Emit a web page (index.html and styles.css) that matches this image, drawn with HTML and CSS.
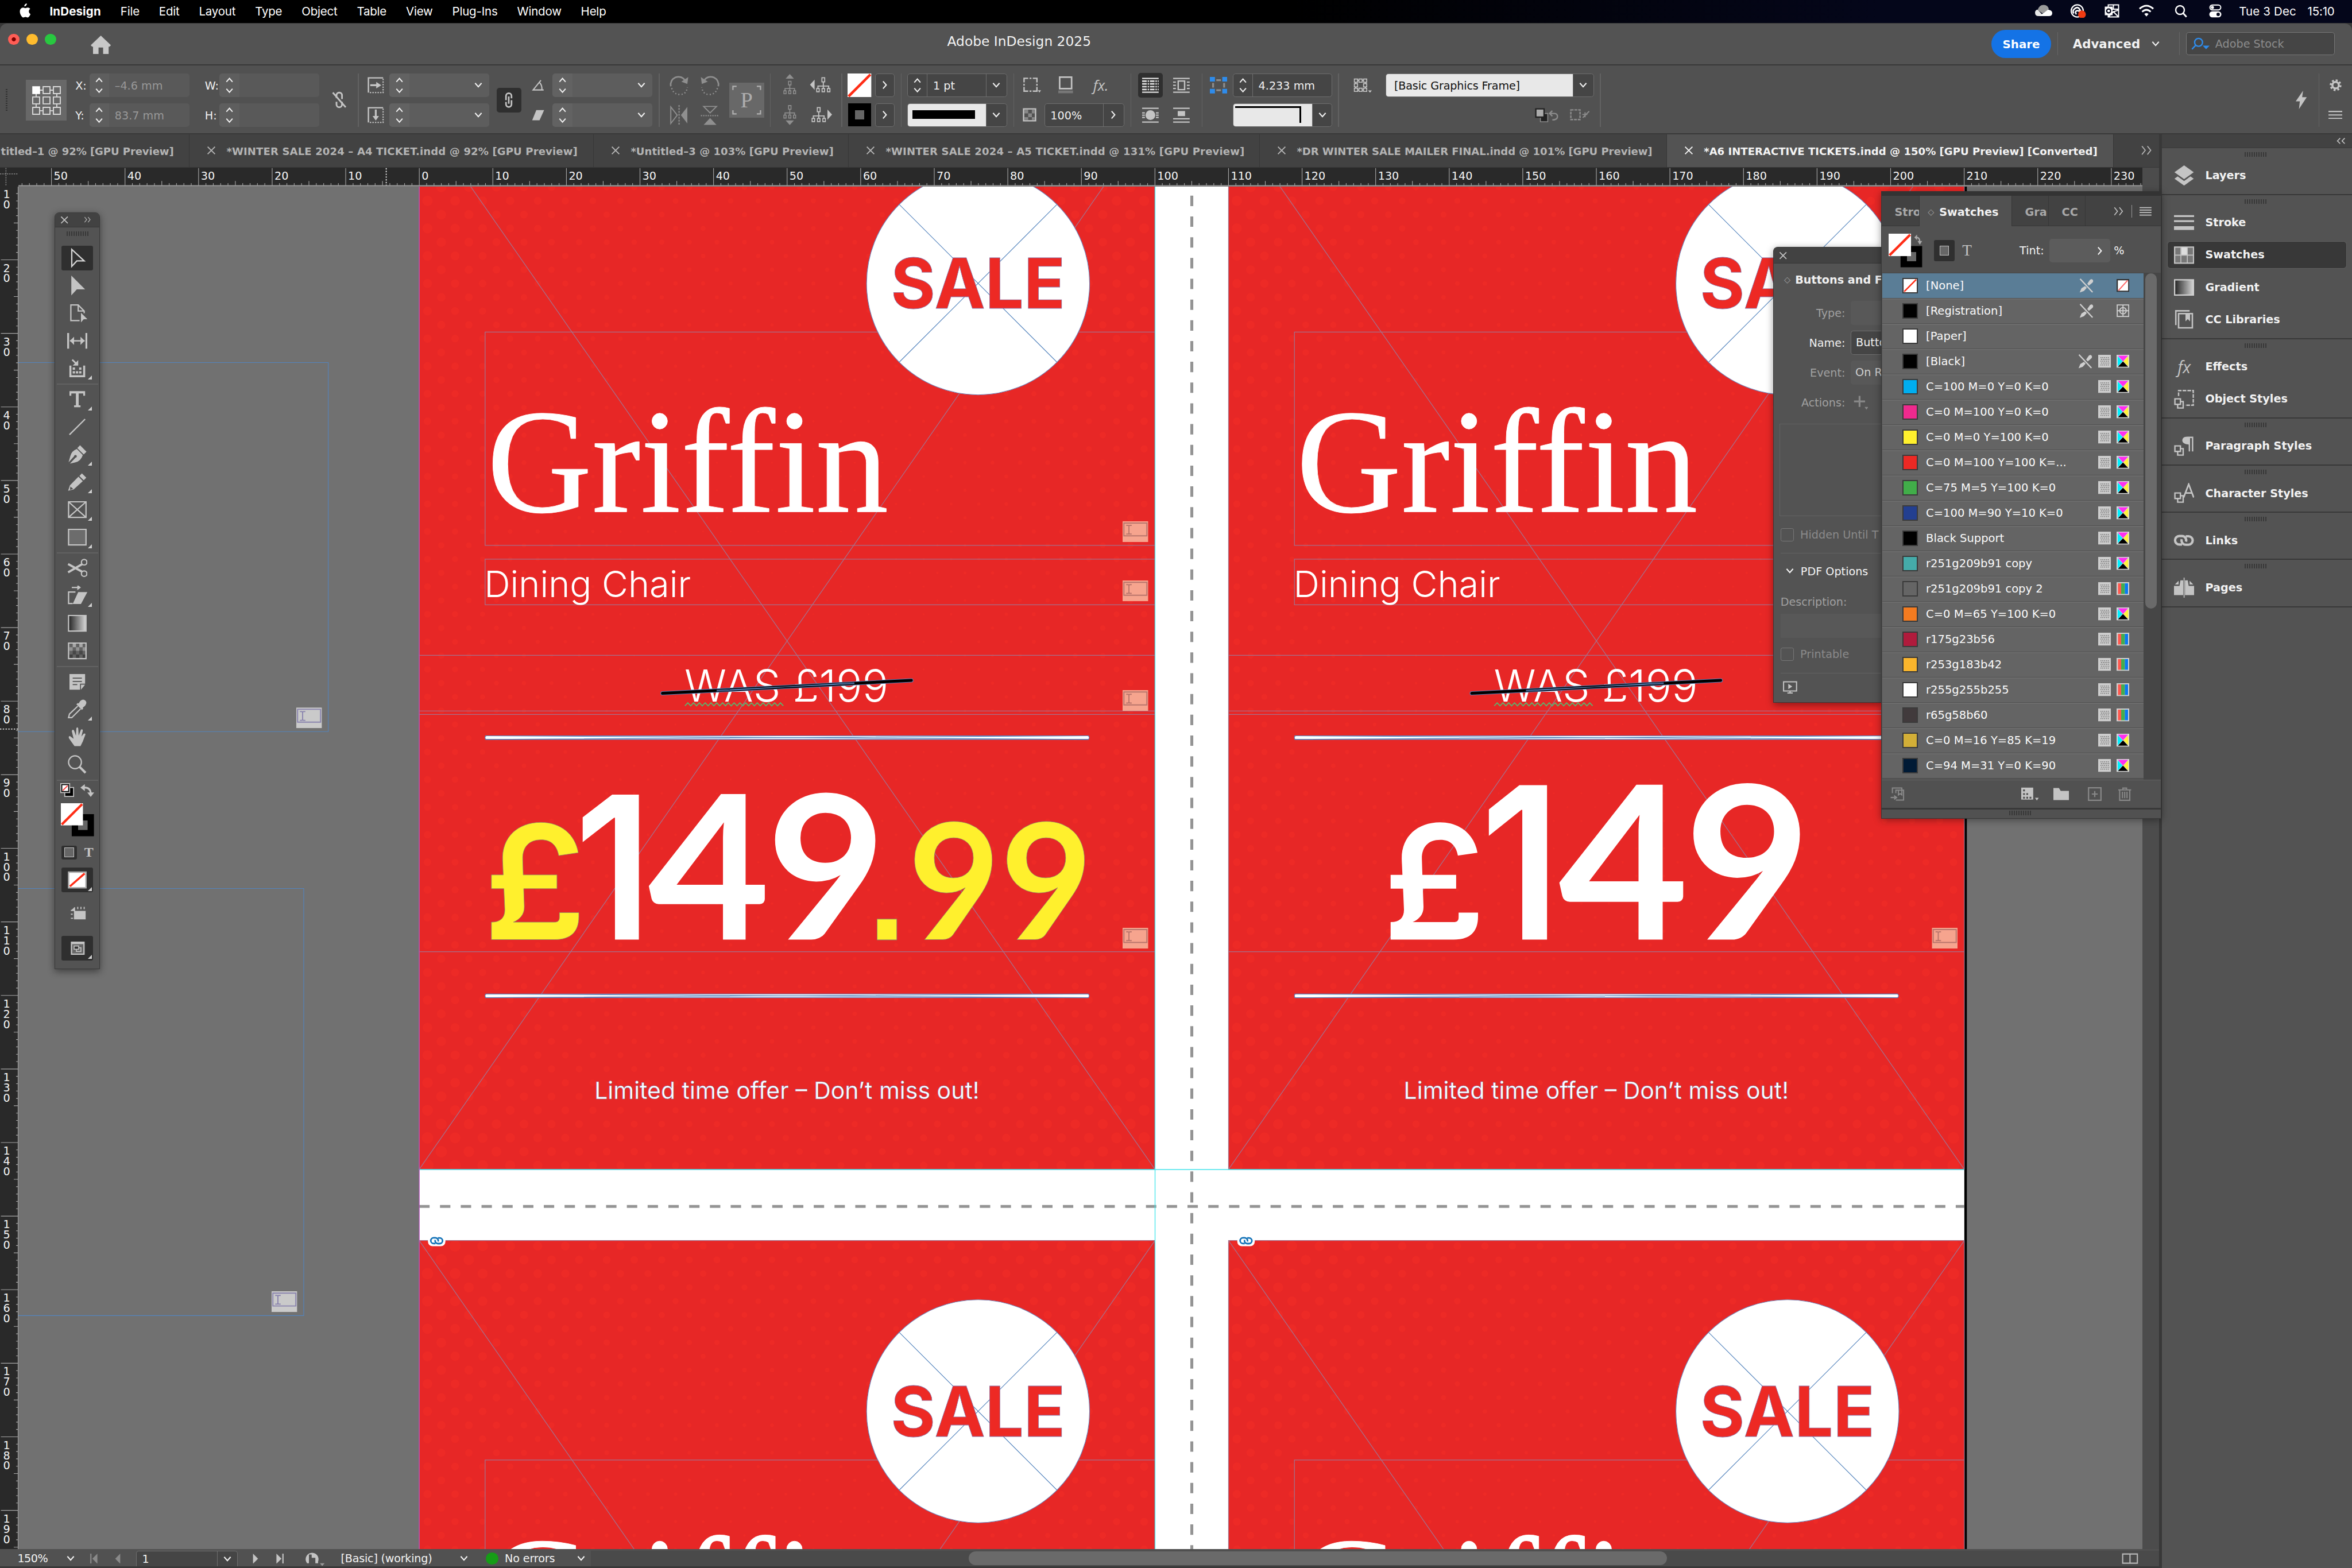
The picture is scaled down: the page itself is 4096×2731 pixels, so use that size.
FILE: index.html
```html
<!DOCTYPE html>
<html lang="en">
  <head>
    <meta charset="utf-8" />
    <title>Adobe InDesign 2025</title>
    <link rel="stylesheet" href="styles.css" />
  </head>

  <body>
    <svg class="defs" width="0" height="0">
      <symbol id="chev-down" viewBox="0 0 10 10"><path d="M1.5 3 5 7 8.5 3" fill="none" stroke="currentColor" stroke-width="1.3"/></symbol>
      <symbol id="chev-up" viewBox="0 0 10 10"><path d="M1.5 7 5 3 8.5 7" fill="none" stroke="currentColor" stroke-width="1.3"/></symbol>
      <symbol id="chev-right" viewBox="0 0 10 10"><path d="M3 1 6.5 5 3 9" fill="none" stroke="currentColor" stroke-width="1.3"/></symbol>
      <symbol id="chev-double" viewBox="0 0 14 12"><path d="M1.5 1 5.5 6 1.5 11M8 1 12 6 8 11" fill="none" stroke="currentColor" stroke-width="1.2"/></symbol>
      <symbol id="close" viewBox="0 0 10 10"><path d="M1 1 9 9M9 1 1 9" stroke="currentColor" stroke-width="1.2"/></symbol>
      <symbol id="none" viewBox="0 0 24 24"><path d="M0 0H24V24H0z" fill="#fff"/><path d="M1 23 23 1" stroke="#ff2d16" stroke-width="2.6"/></symbol>
      <symbol id="chain" viewBox="0 0 24 14"><g fill="none" stroke="currentColor" stroke-width="2.6"><path d="M10 11.5H7a4.6 4.6 0 0 1 0-9.2h3a4.6 4.6 0 0 1 4.3 6"/><path d="M14 2.5h3a4.6 4.6 0 0 1 0 9.2h-3a4.6 4.6 0 0 1-4.3-6"/></g></symbol>
      <symbol id="field-icon" viewBox="0 0 28 22.6"><path class="fi-bg" d="M0 0H28V22.6H0z"/><path class="fi-line" d="M1.5 2H26.5V16H1.5zM4 4.5H6.2L7 5.2 7.8 4.5H10M7 5V13.5M4 14H6.2L7 13.3 7.8 14H10"/></symbol>
      <symbol id="tree" viewBox="0 0 18 20"><path d="M9 6V11M2.5 14V11H15.5V14M9 11V14" fill="none" stroke="currentColor" stroke-width="1.3"/><path d="M7.3 1H10.7V6H7.3zM1 14H4V18H1zM7.5 14H10.5V18H7.5zM14 14H17V18H14z" fill="none" stroke="currentColor" stroke-width="1.2"/></symbol>
      <symbol id="nopen" viewBox="0 0 16 16"><path d="M1 .5 15 15.5" stroke="currentColor" stroke-width="1.5"/><path d="M9 6 12 1.6Q14 0 15.2 1.6 16.4 3.5 14.5 5L10.8 8zM6.5 8.5 2.5 11 .5 15.8 5.3 14 8.5 10.5z" fill="currentColor"/></symbol>
      <symbol id="tint" viewBox="0 0 14 14"><path d="M0 0H14V14H0z" fill="#cdcdcd"/><path d="M2.5 3H11.5M3 5H12M2.5 7H11.5M3 9H12M2.5 11H11.5" stroke="#777" stroke-width="1.1" stroke-dasharray="1 1"/></symbol>
      <symbol id="cmyk" viewBox="0 0 14 14"><path d="M0 0H14V14H0z" fill="#d8d8d8"/><path d="M1.5 1H12.5L7 7z" fill="#ff2df0"/><path d="M1.2 1.5V12.5L6.6 7z" fill="#00f0ff"/><path d="M12.8 1.5V12.5L7.4 7z" fill="#fff23a"/><path d="M1.5 13H12.5L7 7.2z" fill="#000"/></symbol>
      <symbol id="rgb" viewBox="0 0 14 14"><path d="M0 0H14V14H0z" fill="#d0d0d0"/><path d="M1.5 1.2H5V12.8H1.5z" fill="#ff5a50"/><path d="M5 1.2H9V12.8H5z" fill="#43ad4e"/><path d="M9 1.2H12.5V12.8H9z" fill="#0a78f0"/></symbol>
      <symbol id="reg" viewBox="0 0 14 14"><path d="M.7 .7H13.3V13.3H.7zM7 1V13M1 7H13M7 3.5A3.5 3.5 0 1 1 7 10.5 3.5 3.5 0 1 1 7 3.5z" fill="none" stroke="#cdcdcd" stroke-width="1.2"/></symbol>
      <symbol id="nonebox" viewBox="0 0 14 14"><path d="M.7 .7H13.3V13.3H.7z" fill="#fff" stroke="#333" stroke-width="1.4"/><path d="M2 12.5 12 1.5" stroke="#f66" stroke-width="1.2"/></symbol>
    </svg>

    <header class="menubar">
      <svg class="apple" viewBox="0 0 14 16"><path d="M9.2 0c.2 1.6-1.2 3.2-2.7 3.2C6.3 1.6 7.7.2 9.2 0zM11.4 8.5c0-1.7 1.4-2.5 1.5-2.6-.8-1.2-2.1-1.4-2.6-1.4-1.1-.1-2.1.6-2.7.6-.6 0-1.4-.6-2.4-.6-1.2 0-2.3.7-3 1.8-1.2 2.2-.3 5.4.9 7.2.6.9 1.3 1.8 2.3 1.8.9 0 1.2-.6 2.3-.6s1.4.6 2.3.6c1 0 1.6-.9 2.2-1.7.7-1 1-2 1-2-.1-.1-1.8-.8-1.8-3.1z" fill="#fff"/></svg>
      <nav class="menus">
        <b>InDesign</b><span>File</span><span>Edit</span><span>Layout</span><span>Type</span><span>Object</span><span>Table</span><span>View</span><span>Plug-Ins</span><span>Window</span><span>Help</span>
      </nav>
      <div class="menu-extras">
        <svg viewBox="0 0 20 16"><path d="M4 14Q0 14 0 10 0 7 3 6.5L10 14z" fill="#e8e8e8"/><path d="M3 7Q5 1 10 1T16 6L9 11z" fill="#9a9a9a"/><path d="M5 14 15 6.5Q20 7 20 10.5 20 14 16 14z" fill="#fff"/></svg>
        <svg viewBox="0 0 20 16"><circle cx="9" cy="8" r="7" fill="none" stroke="#fff" stroke-width="1.5"/><path d="M5 11Q3 8 6 5.5T11 5L13 8M8 12Q6 9 8 8T12 9" fill="none" stroke="#fff" stroke-width="1.7"/><circle cx="14.5" cy="12" r="4.5" fill="#f23b12"/></svg>
        <svg viewBox="0 0 20 16"><path d="M5 1H17V15H5zM5 6H17M11 1V6M5 15 11 9 17 15M11 9 17 7" fill="none" stroke="#fff" stroke-width="1.3"/><path d="M1 3H10V13H1z" fill="#fff"/><circle cx="5.5" cy="8" r="2.3" fill="none" stroke="#04061a" stroke-width="1.5"/></svg>
        <svg viewBox="0 0 20 16"><path d="M2 5.5Q10-1.5 18 5.5M5 9Q10 4.5 15 9" fill="none" stroke="#fff" stroke-width="2"/><path d="M7.5 11.5Q10 9.5 12.5 11.5L10 14.5z" fill="#fff"/></svg>
        <svg viewBox="0 0 20 16"><circle cx="9" cy="7" r="5" fill="none" stroke="#fff" stroke-width="1.6"/><path d="M12.5 10.5 16.5 15" stroke="#fff" stroke-width="1.8"/></svg>
        <svg viewBox="0 0 20 16"><rect x="3.7" y="1.2" width="12.6" height="5.6" rx="2.8" fill="none" stroke="#fff" stroke-width="1.3"/><circle cx="6.6" cy="4" r="1.8" fill="#fff"/><rect x="3" y="8.5" width="14" height="7" rx="3.5" fill="#fff"/><circle cx="13.3" cy="12" r="2" fill="#04061a"/></svg>
      </div>
      <div class="clock"><span>Tue 3 Dec</span><span>15:10</span></div>
    </header>

    <div class="titlebar">
      <div class="lights"><i class="red"></i><i class="amber"></i><i class="green"></i></div>
      <svg class="home" viewBox="0 0 22 20"><path d="M11 0 22 10.5 20.5 12H19.5V20H13.5V13H8.5V20H2.5V12H1.5L0 10.5z" fill="#c8c8c8"/></svg>
      <span class="app-title">Adobe InDesign 2025</span>
      <button class="share">Share</button>
      <div class="workspace-name">Advanced <svg class="ic10"><use href="#chev-down"/></svg></div>
      <div class="stock">
        <svg viewBox="0 0 20 14"><circle cx="8" cy="5.5" r="4.3" fill="none" stroke="#2f8ceb" stroke-width="1.5"/><path d="M5 8.5 .8 13" stroke="#2f8ceb" stroke-width="1.5"/><path d="M12.5 9H20L16.2 13z" fill="#2f8ceb"/></svg>
        <span>Adobe Stock</span>
      </div>
    </div>

    <div class="control-bar">
      <div class="cell tall left"><i class="dots-grip"></i></div>
      <div class="cell tall left"><svg class="ref-point" viewBox="0 0 44.5 44.5"><path d="M0 0H44.5V44.5H0z" fill="#686868"/><g fill="none" stroke="#d8d8d8" stroke-width="1.2"><path d="M18.8 7.5h7.5V15h-7.5zM30 7.5h7.5V15H30zM7.5 18.7H15v7.5H7.5zM18.8 18.7h7.5v7.5h-7.5zM30 18.7h7.5v7.5H30zM7.5 30H15v7.5H7.5zM18.8 30h7.5v7.5h-7.5zM30 30h7.5v7.5H30z"/><path d="M15 11.2h3.8M26.3 11.2H30M15 33.7h3.8M26.3 33.7H30M11.2 15v3.7M11.2 26.2V30M33.7 15v3.7M33.7 26.2V30"/></g><path d="M7 7h8.5v8.5H7z" fill="#fff"/></svg></div>
      <div class="cell left lbl">X:</div><div class="cell left lbl">Y:</div>
      <div class="field off"><span class="step"><svg><use href="#chev-up"/></svg><svg><use href="#chev-down"/></svg></span><em>–4.6 mm</em></div>
      <div class="field off"><span class="step"><svg><use href="#chev-up"/></svg><svg><use href="#chev-down"/></svg></span><em>83.7 mm</em></div>
      <div class="cell left lbl">W:</div><div class="cell left lbl">H:</div>
      <div class="field off"><span class="step"><svg><use href="#chev-up"/></svg><svg><use href="#chev-down"/></svg></span></div>
      <div class="field off"><span class="step"><svg><use href="#chev-up"/></svg><svg><use href="#chev-down"/></svg></span></div>
      <div class="cell tall"><svg width="16" height="20" viewBox="0 0 16 20"><path d="M5 8V5a3 3 0 0 1 6 0v4M5 12v3a3 3 0 0 0 6 0v-3M1 2 15 18" fill="none" stroke="#c4c4c4" stroke-width="1.8"/></svg></div>
      <div class="cell tall"><i class="vsep"></i></div>
      <div class="cell left"><svg width="18" height="18" viewBox="0 0 18 18"><path d="M1 17V1H17" fill="none" stroke="#c4c4c4" stroke-width="1.5"/><path d="M17 2V17H2" fill="none" stroke="#c4c4c4" stroke-width="1.3" stroke-dasharray="1.5 1.3"/><path d="M3 8H9.5V5.5L15 9 9.5 12.5V10H3z" fill="#c4c4c4"/></svg></div>
      <div class="cell left"><svg width="18" height="18" viewBox="0 0 18 18"><path d="M1 17V1H17" fill="none" stroke="#c4c4c4" stroke-width="1.5"/><path d="M17 2V17H2" fill="none" stroke="#c4c4c4" stroke-width="1.3" stroke-dasharray="1.5 1.3"/><path d="M8 3V10H5.5L9 15 12.5 10H10V3z" fill="#c4c4c4"/></svg></div>
      <div class="field dim"><span class="step"><svg><use href="#chev-up"/></svg><svg><use href="#chev-down"/></svg></span><svg class="drop"><use href="#chev-down"/></svg></div>
      <div class="field dim"><span class="step"><svg><use href="#chev-up"/></svg><svg><use href="#chev-down"/></svg></span><svg class="drop"><use href="#chev-down"/></svg></div>
      <div class="cell tall"><span class="chain-btn"><svg width="10" height="18" viewBox="0 0 10 18"><path d="M2 7V4.5a3 3 0 0 1 6 0V7M5 5v8M2 11v2.5a3 3 0 0 0 6 0V11M2 7V9M8 9v2" fill="none" stroke="#c4c4c4" stroke-width="1.7"/></svg></span></div>
      <div class="cell"><svg width="14" height="12" viewBox="0 0 14 12"><path d="M10 .5 1.5 11H13M8.5 3Q11.5 6 11 11" fill="none" stroke="#c4c4c4" stroke-width="1.3"/></svg></div>
      <div class="cell"><svg width="14" height="12" viewBox="0 0 14 12"><path d="M5 .5H13.5L8.5 11.5H.5z" fill="#c4c4c4"/></svg></div>
      <div class="field dim"><span class="step"><svg><use href="#chev-up"/></svg><svg><use href="#chev-down"/></svg></span><svg class="drop"><use href="#chev-down"/></svg></div>
      <div class="field dim"><span class="step"><svg><use href="#chev-up"/></svg><svg><use href="#chev-down"/></svg></span><svg class="drop"><use href="#chev-down"/></svg></div>
      <div class="cell tall"><i class="vsep"></i></div>
      <div class="cell grey"><svg width="22" height="22" viewBox="0 0 22 22"><path d="M2 12A8.5 8.5 0 0 1 17 5" fill="none" stroke="currentColor" stroke-width="1.7"/><path d="M21 2 20 9.5 13.5 7z" fill="currentColor"/><path d="M3 14Q5 21 12 21T20 13" fill="none" stroke="currentColor" stroke-width="1.5" stroke-dasharray="1.3 2.2"/></svg></div>
      <div class="cell grey"><svg width="22" height="22" viewBox="0 0 22 22"><path d="M2 2V20L9 11z" fill="none" stroke="currentColor" stroke-width="1.2"/><path d="M20 2V20L13 11z" fill="currentColor"/><path d="M11 0V22" stroke="currentColor" stroke-width="1.3" stroke-dasharray="2 1.2"/></svg></div>
      <div class="cell grey"><svg width="22" height="22" viewBox="0 0 22 22"><g transform="translate(22) scale(-1 1)"><path d="M2 12A8.5 8.5 0 0 1 17 5" fill="none" stroke="currentColor" stroke-width="1.7"/><path d="M21 2 20 9.5 13.5 7z" fill="currentColor"/><path d="M3 14Q5 21 12 21T20 13" fill="none" stroke="currentColor" stroke-width="1.5" stroke-dasharray="1.3 2.2"/></g></svg></div>
      <div class="cell grey"><svg width="22" height="22" viewBox="0 0 22 22"><path d="M4 1.5H18L11 8.5z" fill="none" stroke="currentColor" stroke-width="1.2"/><path d="M4 21.5H18L11 14z" fill="currentColor"/><path d="M1 11.5H21" stroke="currentColor" stroke-width="1.3" stroke-dasharray="1.3 1.2"/></svg></div>
      <div class="cell tall"><div class="pbox">P<svg viewBox="0 0 38 38"><path d="M4 8V4H8M30 4H34V8M34 30V34H30M8 34H4V30" fill="none" stroke="#b0b0b0" stroke-width="1.4"/></svg></div></div>
      <div class="cell tall"><i class="vsep"></i></div>
      <div class="cell grey"><svg width="18" height="24" viewBox="0 0 18 24"><path d="M4.5 5 9 0 13.5 5z" fill="currentColor"/><use href="#tree" x="1" y="7" width="16" height="16"/></svg></div>
      <div class="cell grey"><svg width="18" height="24" viewBox="0 0 18 24"><path d="M4.5 18 9 23 13.5 18z" fill="currentColor"/><use href="#tree" x="1" y="1" width="16" height="16"/></svg></div>
      <div class="cell pale"><svg width="26" height="18" viewBox="0 0 26 18"><path d="M6 3 1 8.5 6 14z" fill="currentColor"/><use href="#tree" x="7" y="0" width="17" height="18"/></svg></div>
      <div class="cell pale"><svg width="26" height="18" viewBox="0 0 26 18"><path d="M20 3 25 8.5 20 14z" fill="currentColor"/><use href="#tree" x="2" y="0" width="17" height="18"/></svg></div>
      <div class="cell tall"><i class="vsep"></i></div>
      <div class="cell"><svg width="26" height="26" viewBox="0 0 24 24"><use href="#none"/></svg></div>
      <div class="cell"><i class="stroke-chip"></i></div>
      <div class="cell"><span class="mini-btn"><svg class="ic10"><use href="#chev-right"/></svg></span></div>
      <div class="cell"><span class="mini-btn"><svg class="ic10"><use href="#chev-right"/></svg></span></div>
      <div class="cell tall"><i class="vsep"></i></div>
      <div class="field live"><span class="step"><svg><use href="#chev-up"/></svg><svg><use href="#chev-down"/></svg></span><em>1 pt</em><span class="dropbox"><svg class="ic10"><use href="#chev-down"/></svg></span></div>
      <div class="field live"><span class="line-preview"><i></i></span><span class="dropbox"><svg class="ic10"><use href="#chev-down"/></svg></span></div>
      <div class="cell tall"><i class="vsep"></i></div>
      <div class="cell pale"><svg width="20" height="18" viewBox="0 0 20 18"><path d="M1.5 1.5H15.5V15.5H1.5z" fill="none" stroke="currentColor" stroke-width="1.5"/><path d="M7.5 1.5H6M11 1.5H9.5M7.5 15.5H6M11 15.5H9.5M1.5 7.5V6M1.5 11V9.5M15.5 7.5V6M15.5 11V9.5" stroke="#515151" stroke-width="2"/><path d="M16.5 14.5H20L18.2 17z" fill="currentColor"/></svg></div>
      <div class="cell left pale checker"><svg width="15" height="15" viewBox="0 0 15 15"><path d="M1 1H14V14H1z" fill="none" stroke="currentColor" stroke-width="1.5"/><path d="M2 2H6V6H2zM10 2H13V6H10zM6 6H10V10H6zM2 10H6V13H2zM10 10H13V13H10z" fill="#888"/></svg></div>
      <div class="cell pair pale"><svg width="16" height="20" viewBox="0 0 16 20"><path d="M1.5 1.5H14.5V14H1.5z" fill="none" stroke="currentColor" stroke-width="1.7"/><path d="M0 16H16V19H0z" fill="#777"/></svg><span class="fx">fx.</span></div>
      <div class="field live opacity"><em>100%</em><span class="dropbox"><svg class="ic10"><use href="#chev-right"/></svg></span></div>
      <div class="cell tall"><i class="vsep"></i></div>
      <div class="cell"><span class="wrap-on"><svg width="18" height="17" viewBox="0 0 18 17"><path d="M0 1H18M0 16H18" stroke="#e0e0e0" stroke-width="1.4"/><path d="M0 4H18M0 7H18M0 10H18M0 13H18" stroke="#e0e0e0" stroke-width="1.7" stroke-dasharray="5 1 1.5 1"/></svg></span></div>
      <div class="cell pale"><svg width="18" height="17" viewBox="0 0 18 17"><path d="M0 1H18M0 16H18M0 6H3M0 8.5H3M0 11H3M15 6H18M15 8.5H18M15 11H18" stroke="currentColor" stroke-width="1.4"/><circle cx="9" cy="8.5" r="5.3" fill="currentColor"/></svg></div>
      <div class="cell pale"><svg width="18" height="17" viewBox="0 0 18 17"><path d="M0 1H18M0 16H18M0 5H3M0 8.5H3M0 12H3M15 5H18M15 8.5H18M15 12H18" stroke="currentColor" stroke-width="1.4"/><path d="M5.5 3.8H12.5V13.2H5.5z" fill="none" stroke="currentColor" stroke-width="1.5"/></svg></div>
      <div class="cell pale"><svg width="18" height="17" viewBox="0 0 18 17"><path d="M0 1H18M0 12.5H18M0 16H18" stroke="currentColor" stroke-width="1.4"/><path d="M5 4H13V9.5H5z" fill="currentColor"/></svg></div>
      <div class="cell tall"><i class="vsep"></i></div>
      <div class="cell"><svg width="19" height="18" viewBox="0 0 19 18"><path d="M0 0H5.5V5H0zM13.5 0H19V5H13.5zM0 13H5.5V18H0zM13.5 13H19V18H13.5z" fill="#2f8ceb"/><path d="M7 3.5H12M7 14.5H12M3.5 6.5V11.5M15.5 6.5V11.5" stroke="#8d8d8d" stroke-width="2"/></svg></div>
      <div class="cell"></div>
      <div class="field live"><span class="step"><svg><use href="#chev-up"/></svg><svg><use href="#chev-down"/></svg></span><em>4.233 mm</em></div>
      <div class="field live"><span class="line-preview"><b></b></span><span class="dropbox"><svg class="ic10"><use href="#chev-down"/></svg></span></div>
      <div class="cell tall"><i class="vsep"></i></div>
      <div class="cell pale"><svg width="20" height="16" viewBox="0 0 20 16"><path d="M2.5 2.5H13V13H2.5z" fill="none" stroke="currentColor" stroke-width="1.3"/><path d="M1 1h3.5v3.5H1zM6 1h3.5v3.5H6zM11 1h3.5v3.5H11zM1 6h3.5v3.5H1zM11 6h3.5v3.5H11zM1 11h3.5v3.5H1zM6 11h3.5v3.5H6zM11 11h3.5v3.5H11z" fill="#515151" stroke="currentColor" stroke-width="1"/><path d="M16 13.5H20L18 16z" fill="currentColor"/></svg></div>
      <div class="cell"></div>
      <div class="field live style-select"><em>[Basic Graphics Frame]</em><span class="dropbox"><svg class="ic10"><use href="#chev-down"/></svg></span></div>
      <div class="cell style-icons"><svg width="26" height="16" viewBox="0 0 26 16"><path d="M6 6H14V15H6z" fill="#222" stroke="#8c8c8c"/><path d="M1 1H10V10H1z" fill="#aaa" stroke="#222" stroke-width="1.5"/><path d="M19 3 16 6 19 9M16 6H21Q25 6 24.5 10 24 13 19 13" fill="none" stroke="#8c8c8c" stroke-width="1.5"/></svg><svg width="22" height="14" viewBox="0 0 22 14"><path d="M1 1.5H11V12H1z" fill="none" stroke="#8c8c8c" stroke-width="1.5" stroke-dasharray="3 1"/><path d="M14 10 21 3M13.5 6.5H19M16.5 4V9.5" stroke="#8c8c8c" stroke-width="1.2"/></svg></div>
      <div class="cell tall"><i class="vsep"></i></div>
      <div class="cell tall"></div>
      <div class="cell tall"><svg width="12" height="20" viewBox="0 0 12 20"><path d="M8 0 0 11.5H4.5L3.5 20 12 7H7z" fill="#c4c4c4"/></svg></div>
      <div class="cell tall"><i class="vsep"></i></div>
      <div class="cell pale"><svg width="13" height="13" viewBox="0 0 13 13"><circle cx="6.5" cy="6.5" r="3.5" fill="none" stroke="currentColor" stroke-width="2.2"/><circle cx="6.5" cy="6.5" r="5.3" fill="none" stroke="currentColor" stroke-width="2.2" stroke-dasharray="2.1 2.06"/></svg></div>
      <div class="cell pale"><svg width="15" height="9" viewBox="0 0 15 9"><path d="M0 .7H15M0 4.5H15M0 8.3H15" stroke="currentColor" stroke-width="1.3"/></svg></div>
    </div>

    <div class="work">
      <main class="doc-window">
        <div class="tabs">
          <div class="tab first"><span>titled–1 @ 92% [GPU Preview]</span></div>
          <div class="tab t2"><svg><use href="#close"/></svg><span>*WINTER SALE 2024 – A4 TICKET.indd @ 92% [GPU Preview]</span></div>
          <div class="tab t3"><svg><use href="#close"/></svg><span>*Untitled–3 @ 103% [GPU Preview]</span></div>
          <div class="tab t4"><svg><use href="#close"/></svg><span>*WINTER SALE 2024 – A5 TICKET.indd @ 131% [GPU Preview]</span></div>
          <div class="tab t5"><svg><use href="#close"/></svg><span>*DR WINTER SALE MAILER FINAL.indd @ 101% [GPU Preview]</span></div>
          <div class="tab t6 on"><svg><use href="#close"/></svg><span>*A6 INTERACTIVE TICKETS.indd @ 150% [GPU Preview] [Converted]</span></div>
          <svg class="more" viewBox="0 0 14 12"><use href="#chev-double"/></svg>
        </div>
        <div class="doc-grid">
          <svg class="origin" viewBox="0 0 20 20"><path d="M6.5 0V20M0 6.5H20" stroke="#999" stroke-width=".8" stroke-dasharray="1.5 1"/></svg>
          <svg class="hruler" id="hruler" viewBox="20 182.5 2312 20.5"></svg>
          <div class="scroll-top"></div>
          <svg class="vruler" id="vruler" viewBox="0 203 20 1483.5"></svg>
          <svg class="canvas" id="canvas" viewBox="20 203 2312 1483.5"></svg>
          <div class="vscroll"></div>
        </div>
        <footer class="status">
          <span class="zoom">150%</span><svg class="ic10"><use href="#chev-down"/></svg>
          <svg class="nav-ic first-pg dimmed" viewBox="0 0 10 12"><path d="M1 0H2.5V12H1zM9.5 0V12L3.5 6z" fill="currentColor"/></svg>
          <svg class="nav-ic prev-pg dimmed" viewBox="0 0 10 12"><path d="M8 0V12L2 6z" fill="currentColor"/></svg>
          <div class="page-box"><em>1</em><span><svg class="ic10"><use href="#chev-down"/></svg></span></div>
          <svg class="nav-ic next-pg" viewBox="0 0 10 12"><path d="M2 0V12L8 6z" fill="currentColor"/></svg>
          <svg class="nav-ic last-pg" viewBox="0 0 10 12"><path d="M7.5 0H9V12H7.5zM.5 0V12L6.5 6z" fill="currentColor"/></svg>
          <svg class="preview-ic" viewBox="0 0 22 16"><path d="M3 13A7 7 0 1 1 15 11V13H12V7H8V3.5H5V13z" fill="#c4c4c4"/><path d="M17 13H22L19.5 16z" fill="#999"/></svg>
          <span class="profile">[Basic] (working)</span><svg class="ic10"><use href="#chev-down"/></svg>
          <i class="ok-dot"></i><span class="errors">No errors</span><svg class="ic10"><use href="#chev-down"/></svg>
          <div class="hscroll"><i></i><svg viewBox="0 0 18 12"><path d="M1 1H17V11H1zM9 1V11" fill="none" stroke="#b8b8b8" stroke-width="1.3"/></svg></div>
        </footer>
      </main>

      <aside class="dock">
        <div class="dock-top"><svg viewBox="0 0 10 8"><path d="M4 1 1 4 4 7M9 1 6 4 9 7" fill="none" stroke="#c4c4c4" stroke-width="1"/></svg></div>
        <section><i class="grip"></i>
          <div class="dock-item"><svg viewBox="0 0 22 22"><path d="M11 0 21.5 7.5 11 15 .5 7.5z" fill="#c4c4c4"/><path d="M.5 14.5 4 12 11 17 18 12 21.5 14.5 11 22z" fill="#c4c4c4"/></svg>Layers</div>
        </section>
        <section><i class="grip"></i>
          <div class="dock-item"><svg viewBox="0 0 22 22"><path d="M0 4H22M0 9.5H22" stroke="#c4c4c4" stroke-width="2"/><path d="M0 15H22V19H0z" fill="#c4c4c4"/></svg>Stroke</div>
          <div class="dock-item on"><svg viewBox="0 0 22 22"><path d="M.7 2.7H21.3V20.3H.7z" fill="#777" stroke="#c4c4c4" stroke-width="1.4"/><path d="M8 3H14.5V11.5H8z" fill="#ddd"/><path d="M7.5 3V20M14.5 3V20M0 11.5H22" stroke="#c4c4c4"/></svg>Swatches</div>
          <div class="dock-item"><svg viewBox="0 0 22 22"><path d="M.7 2.7H21.3V19.3H.7z" fill="url(#gradDark)" stroke="#d0d0d0" stroke-width="1.4"/></svg>Gradient</div>
          <div class="dock-item"><svg viewBox="0 0 22 22"><path d="M5 4.5H20V20H5zM2 17V1.5H17" fill="none" stroke="#c4c4c4" stroke-width="1.6"/><path d="M12.5 4.5H17.5V13L15 10.5 12.5 13z" fill="#c4c4c4"/></svg>CC Libraries</div>
        </section>
        <section><i class="grip"></i>
          <div class="dock-item"><span class="fx big">fx</span>Effects</div>
          <div class="dock-item"><svg viewBox="0 0 22 22"><path d="M5 8V2H21V18H12" fill="none" stroke="#c4c4c4" stroke-width="1.5" stroke-dasharray="4 1.2"/><path d="M1 11H7V17H1zM7 14H10V21H4V17" fill="none" stroke="#c4c4c4" stroke-width="1.5"/></svg>Object Styles</div>
        </section>
        <section><i class="grip"></i>
          <div class="dock-item"><svg viewBox="0 0 22 22"><path d="M15 1H21V17H19.5V2.5H17.5V17H16V9.5Q9 9 9 5 9 1 15 1z" fill="#c4c4c4"/><path d="M1 11H7V17H1zM7 14H10V21H4V17" fill="none" stroke="#c4c4c4" stroke-width="1.5"/></svg>Paragraph Styles</div>
        </section>
        <section><i class="grip"></i>
          <div class="dock-item"><svg viewBox="0 0 22 22"><path d="M10.5 16 16 1.5 21.5 16M12.5 11H19.5" fill="none" stroke="#c4c4c4" stroke-width="1.7"/><path d="M1 11H7V17H1zM7 14H10V21H4V17" fill="none" stroke="#c4c4c4" stroke-width="1.5"/></svg>Character Styles</div>
        </section>
        <section><i class="grip"></i>
          <div class="dock-item"><svg class="wide" viewBox="0 0 24 14"><use href="#chain"/></svg>Links</div>
        </section>
        <section><i class="grip"></i>
          <div class="dock-item"><svg viewBox="0 0 22 22"><path d="M11 0V22" stroke="#c4c4c4" stroke-width="1"/><path d="M7 3H10V19H0V9H6z" fill="#c4c4c4"/><path d="M15 3H12V19H22V9H16z" fill="#c4c4c4"/><path d="M1 7.5 5 3.5V7.5zM21 7.5 17 3.5V7.5z" fill="#c4c4c4"/></svg>Pages</div>
        </section>
      </aside>

      <div class="tools">
        <div class="tools-head"><svg><use href="#close"/></svg><svg viewBox="0 0 14 12"><use href="#chev-double"/></svg></div>
        <i class="grip"></i>
        <div class="tool on"><svg viewBox="0 0 22 22"><path d="M5 1.5V20L10.5 14H18.5z" fill="none" stroke="#d6d6d6" stroke-width="1.4"/></svg></div>
        <div class="tool"><svg viewBox="0 0 22 22"><path d="M4.5 0V21.5L10.5 15H19.5z" fill="#c4c4c4"/></svg></div>
        <div class="tool"><svg viewBox="0 0 22 22"><path d="M13.5 19H4V2H12L18.5 8.5V11M12 2V8.5H18" fill="none" stroke="#c4c4c4" stroke-width="1.4"/><path d="M15 10.5V21L18 17.5H22z" fill="#c4c4c4"/></svg></div>
        <div class="tool"><svg viewBox="0 0 22 22"><path d="M1 2.5V19.5M21 2.5V19.5" stroke="#c4c4c4" stroke-width="2.2"/><path d="M3 11H19" stroke="#c4c4c4" stroke-width="1.5"/><path d="M3 11 7.5 6.5V15.5zM19 11 14.5 6.5V15.5z" fill="#c4c4c4"/></svg></div>
        <div class="tool more-tools"><svg viewBox="0 0 22 22"><path d="M3.5 8V19.5H18.5V8" fill="none" stroke="#c4c4c4" stroke-width="2.2"/><path d="M6 10h2.5v2.5H6zM13 10h2.5v2.5H13zM6 14h2.5v2.5H6zM9.5 14H12v2.5H9.5zM13 14h2.5v2.5H13z" fill="#c4c4c4"/><path d="M5.5 1.5 10 6" stroke="#c4c4c4" stroke-width="1.8"/><path d="M12 2V8H6z" fill="#c4c4c4"/></svg></div>
        <hr />
        <div class="tool more-tools"><svg viewBox="0 0 22 22"><path d="M2.5 2H19.5V7H17.5V4.5H12.5V17.5H14.5V19.5H7.5V17.5H9.5V4.5H4.5V7H2.5z" fill="#c4c4c4"/></svg></div>
        <div class="tool"><svg viewBox="0 0 22 22"><path d="M2.5 19.5 19.5 2.5" stroke="#c4c4c4" stroke-width="1.5"/></svg></div>
        <div class="tool more-tools"><svg viewBox="0 0 22 22"><path d="M14 1 21 8 18 11 11 4zM10.5 5 17 11.5Q15 18 9 19.5L3 21 9 14.5A1.5 1.5 0 1 0 7.5 13L1.5 19.5 3.5 12.5Q5 7 10.5 5z" fill="#c4c4c4"/></svg></div>
        <div class="tool more-tools"><svg viewBox="0 0 22 22"><path d="M16 1.5 20.8 6.2 18 9 13.3 4.3zM12.3 5.2 17 10 7 19 1 20.5 3 14.5z" fill="#c4c4c4"/><path d="M3.5 16 6.5 18.5 3 19.5z" fill="#515151"/></svg></div>
        <div class="tool more-tools"><svg viewBox="0 0 22 22"><path d="M1.5 2.5H20.5V19.5H1.5zL20.5 19.5M20.5 2.5 1.5 19.5" fill="none" stroke="#c4c4c4" stroke-width="1.4"/></svg></div>
        <div class="tool more-tools"><svg viewBox="0 0 22 22"><path d="M1.5 2.5H20.5V19.5H1.5z" fill="#6c6c6c" stroke="#c4c4c4" stroke-width="1.4"/></svg></div>
        <hr />
        <div class="tool"><svg viewBox="0 0 22 22"><path d="M1 6.5 16.5 15M1 15.5 16.5 6.5" stroke="#c4c4c4" stroke-width="2.4"/><circle cx="18.5" cy="4.5" r="3" fill="none" stroke="#c4c4c4" stroke-width="1.4"/><circle cx="18.5" cy="17" r="3" fill="none" stroke="#c4c4c4" stroke-width="1.4"/></svg></div>
        <div class="tool more-tools"><svg viewBox="0 0 22 22"><path d="M5 2H12" stroke="#c4c4c4" stroke-width="1.4"/><path d="M11-1 15 2 11 5zM12 7H22L15 20H6z" fill="#c4c4c4"/><path d="M9 7H1.5V19.5H6" fill="none" stroke="#c4c4c4" stroke-width="1.4"/></svg></div>
        <div class="tool"><svg viewBox="0 0 22 22"><defs><linearGradient id="gradDark"><stop offset="0" stop-color="#222"/><stop offset="1" stop-color="#d8d8d8"/></linearGradient></defs><path d="M1.5 2.5H20.5V19.5H1.5z" fill="url(#gradDark)" stroke="#c4c4c4" stroke-width="1.4"/></svg></div>
        <div class="tool"><svg viewBox="0 0 22 22"><path d="M2 3H20V19H2z" fill="#626262"/><path d="M6 5H20" stroke="#a8a8a8" stroke-width="4" stroke-dasharray="3.6 3.6"/><path d="M2.4 9H20" stroke="#929292" stroke-width="4" stroke-dasharray="3.6 3.6"/><path d="M6 13H20" stroke="#474747" stroke-width="4" stroke-dasharray="3.6 3.6"/><path d="M2.4 17H20" stroke="#404040" stroke-width="4" stroke-dasharray="3.6 3.6"/><path d="M1.5 2.5H20.5V19.5H1.5z" fill="none" stroke="#c4c4c4" stroke-width="1.4"/></svg></div>
        <hr />
        <div class="tool"><svg viewBox="0 0 22 22"><path d="M2.5 2.5H19.5V13H14V19.5H2.5z" fill="#c4c4c4"/><path d="M15 19.5V14H19.5z" fill="#c4c4c4"/><path d="M6 7H16M6 10.5H16M6 14H11" stroke="#515151" stroke-width="1.1"/></svg></div>
        <div class="tool more-tools"><svg viewBox="0 0 22 22"><path d="M14 2Q17-1 20 1.5 22 4 19.5 7L17 9 17.5 10 16 11.5 10 5.5 11.5 4 12.5 4.5z" fill="#c4c4c4"/><path d="M11.5 7.5 2.5 16 1.5 20 5 20 14.5 10.5" fill="none" stroke="#c4c4c4" stroke-width="1.4"/></svg></div>
        <div class="tool"><svg viewBox="0 0 22 22"><path d="M8 21Q5 17 2 12.5 1 10 3 10L7 13 5 4.5Q6 2 7.5 4L9.5 9.5 10 1.5Q11-.5 12 1.5L12.5 9.5 15 3Q17 2 17 4L15.5 10.5 18 7.5Q20 6.5 19.8 8.5L17 16 14.5 21z" fill="#c4c4c4"/></svg></div>
        <div class="tool"><svg viewBox="0 0 22 22"><circle cx="8.5" cy="8.5" r="7" fill="none" stroke="#c4c4c4" stroke-width="1.4"/><path d="M13.5 13.5 20 20" stroke="#c4c4c4" stroke-width="2.5"/></svg></div>
        <hr />
        <div class="small-row"><svg viewBox="0 0 14 14"><path d="M4.5 4.5H13.5V13.5H4.5z" fill="#000" stroke="#c4c4c4"/><path d="M.5 .5H9.5V9.5H.5z" fill="#000" stroke="#c4c4c4"/><path d="M2 2H8V8H2z" fill="#fff"/><path d="M2.5 7.5 7.5 2.5" stroke="#f33"/></svg><svg viewBox="0 0 14 14"><path d="M3 4.5Q10 4 10.5 10" fill="none" stroke="#c4c4c4" stroke-width="1.8"/><path d="M0 4.5 4.5 1V8zM7 9.5H14L10.5 14z" fill="#c4c4c4"/></svg></div>
        <div class="fill-stroke"><svg viewBox="0 0 37 37"><path d="M12 12H36.5V36.5H12z" fill="#000"/><path d="M19 19H29.5V29.5H19z" fill="#666"/><use href="#none" width="24.5" height="24.5"/></svg></div>
        <div class="fmt-row"><span class="fmt-on"><i></i></span><b class="t-serif">T</b></div>
        <div class="tool on more-tools"><svg viewBox="0 0 22 22"><path d="M1.5 2.5H20.5V19.5H1.5z" fill="#fff" stroke="#aaa" stroke-width="1.5"/><path d="M3 18 19 4" stroke="#ff2d16" stroke-width="2.2"/></svg></div>
        <div class="tool view-opt"><svg viewBox="0 0 22 22"><path d="M8 9H19.5V17H8zM4 8H8V4.5M11.5 4V6.5M15 4V6.5M18.5 4V6.5M4 12H6M4 16.5H6.5" fill="#c4c4c4" stroke="#c4c4c4" stroke-width="1.2"/></svg></div>
        <div class="tool on more-tools"><svg viewBox="0 0 22 22"><path d="M4.7 4.5H18.3V17.5H4.7z" fill="#666" stroke="#c4c4c4" stroke-width="1.4"/><path d="M5 5.5H18" stroke="#c4c4c4" stroke-width="2"/><path d="M10 10.5H15V14.5H10z" fill="none" stroke="#c4c4c4"/><path d="M7.5 8.5H12.5V12H7.5z" fill="#333" stroke="#c4c4c4"/></svg></div>
      </div>

      <div class="forms-panel">
        <div class="forms-head"><svg><use href="#close"/></svg></div>
        <div class="forms-title"><i class="diamond">◇</i>Buttons and F</div>
        <div class="form-row"><label>Type:</label><span class="inp ghost"></span></div>
        <div class="form-row bright"><label>Name:</label><span class="inp solid">Butto</span></div>
        <div class="form-row"><label>Event:</label><span class="inp ghost">On R</span></div>
        <div class="form-row"><label>Actions:</label><svg class="plus" viewBox="0 0 16 16"><path d="M6.5 1V13M.5 7H12.5" stroke="#888" stroke-width="2"/><path d="M12 13H16L14 16z" fill="#888"/></svg></div>
        <div class="action-list"></div>
        <div class="check-row"><i></i>Hidden Until T</div>
        <div class="pdf-opts"><svg class="ic10"><use href="#chev-down"/></svg>PDF Options</div>
        <div class="desc">Description:<span></span></div>
        <div class="check-row printable"><i></i>Printable</div>
        <div class="forms-foot"><svg viewBox="0 0 16 14"><path d="M.7 .7H15.3V11H.7zM5 13.3H11M8 11V13" fill="none" stroke="#c4c4c4" stroke-width="1.3"/><path d="M6 3V9L10.5 6z" fill="#c4c4c4"/></svg></div>
      </div>

      <div class="swatch-panel">
        <div class="sw-tabs">
          <span class="st1">Stro</span><span class="st2"><i class="diamond">◇</i>Swatches</span><span class="st3">Gra</span><span class="st4">CC</span>
          <div class="st-end"><svg width="12" height="10" viewBox="0 0 14 12"><use href="#chev-double"/></svg><i></i><svg width="13" height="10" viewBox="0 0 13 10"><path d="M0 1H13M0 3.7H13M0 6.4H13M0 9.1H13" stroke="currentColor" stroke-width="1.1"/></svg></div>
        </div>
        <div class="sw-opts">
          <svg class="sw-fs" viewBox="0 0 37 37"><path d="M13 13.5H36.5V36.5H13z" fill="#000"/><path d="M20 20H30V30H20z" fill="#666"/><use href="#none" width="24.5" height="24.5"/><path d="M30 4Q34 4 34 9" fill="none" stroke="#aaa" stroke-width="1.4"/><path d="M28 4 31 1V7zM31.5 8H36.5L34 12z" fill="#aaa"/></svg>
          <span class="fmt-on big"><i></i></span><b class="t-serif">T</b>
          <span class="tint-label">Tint:</span><span class="tint-box"><svg class="ic10"><use href="#chev-right"/></svg></span><span>%</span>
        </div>
        <div class="sw-body">
          <div class="sw-list" id="swatches"></div>
          <div class="sw-scroll"><i></i></div>
        </div>
        <div class="sw-foot">
          <svg class="f1" viewBox="0 0 16 16"><path d="M2 7V1H13V3.5M6 15H15V3.5H6V7M9 3.5V9L11 7.5 13 9V3.5" fill="none" stroke="#8a8a8a" stroke-width="1.3"/><path d="M0 12H4" stroke="#8a8a8a" stroke-width="1.5"/><path d="M4 9 8 12 4 15z" fill="#8a8a8a"/></svg>
          <svg class="f2" viewBox="0 0 20 14"><path d="M0 0H13V13H0z" fill="#c4c4c4"/><path d="M2 2H4V4H2zM2 6H4V8H2zM5.5 6H7.5V8H5.5zM2 10H4V12H2zM5.5 10H7.5V12H5.5zM9 10H11V12H9z" fill="#515151"/><path d="M15 11H19L17 14z" fill="#c4c4c4"/></svg>
          <svg class="f3" viewBox="0 0 17 13"><path d="M0 13V0H6L8 3H17V13z" fill="#c4c4c4"/></svg>
          <svg class="f4" viewBox="0 0 14 14"><path d="M.7 .7H13.3V13.3H.7zM7 4V10M4 7H10" fill="none" stroke="#888" stroke-width="1.3"/></svg>
          <svg class="f5" viewBox="0 0 14 15"><path d="M0 3H14M5 3V1H9V3M1.5 3V14.3H12.5V3M4.5 5V12M7 5V12M9.5 5V12" fill="none" stroke="#888" stroke-width="1.3"/></svg>
        </div>
        <div class="sw-grip"><i class="grip"></i></div>
      </div>
    </div>
    <script src="script.js"></script>
  </body>
</html>
```

FILE: styles.css
```css
* {
  box-sizing: border-box;
}

html {
  background: #222;
}

body {
  margin: 0;
  width: 2560px;
  height: 1706.8px;
  zoom: 1.6;
  overflow: hidden;
  display: flex;
  flex-direction: column;
  background: #383838;
  color: #f2f2f2;
  font-family: "DejaVu Sans", sans-serif;
  font-size: 12px;
}

svg {
  display: block;
  flex: none;
}

i,
em {
  font-style: normal;
}

.defs {
  position: absolute;
}

.ic10 {
  width: 10px;
  height: 10px;
}

.grip {
  display: block;
  width: 24px;
  height: 5px;
  background: repeating-linear-gradient(90deg, #383838 0 1.4px, transparent 1.4px 2.5px);
}

/* menu bar */
.menubar {
  height: 25px;
  flex: none;
  display: flex;
  align-items: center;
  background: linear-gradient(90deg, #000 55%, #04061a 80%);
  color: #fff;
  font-family: Inter, sans-serif;
  font-size: 12.8px;
  padding: 0 19px 1px 20px;
}

.apple {
  width: 14px;
  height: 16px;
}

.menus {
  display: flex;
  gap: 21.2px;
  margin-left: 20px;
  letter-spacing: -0.12px;
}

.menus b {
  letter-spacing: 0.1px;
}

.menu-extras {
  display: flex;
  gap: 17.3px;
  margin-left: auto;
}

.menu-extras svg {
  width: 20px;
  height: 15px;
}

.clock {
  width: 104px;
  display: flex;
  justify-content: space-between;
  margin-left: 16px;
  letter-spacing: 0.1px;
}

.clock span:last-child {
  letter-spacing: -0.1px;
}

/* window title bar */
.titlebar {
  height: 46px;
  flex: none;
  display: flex;
  align-items: center;
  background: #535353;
  border-top: 1px solid #3a3a3a;
  border-bottom: 1.6px solid #383838;
  border-radius: 8px 8px 0 0;
  padding: 0 18.5px 0 9px;
}

.lights {
  display: flex;
  gap: 8px;
  margin-top: -10px;
}

.lights i {
  width: 12px;
  height: 12px;
  border-radius: 50%;
}

.red {
  background: radial-gradient(#7a0000 0 2px, #ff5d55 2.5px);
}

.amber {
  background: #ffbc2e;
}

.green {
  background: #28c840;
}

.home {
  width: 22px;
  height: 20px;
  margin: 2px 0 0 38px;
}

.app-title {
  font-size: 14.6px;
  margin: -5px 0 0 910px;
  width: 170px;
  white-space: nowrap;
}

.share {
  margin-left: auto;
  width: 65px;
  height: 31px;
  border: 0;
  border-radius: 16px;
  padding: 1px 0 0;
  background: #1473e6;
  color: #fff;
  font: bold 12.4px "DejaVu Sans", sans-serif;
}

.workspace-name {
  height: 25px;
  width: 133px;
  margin: 0 7px;
  padding-left: 16px;
  display: flex;
  align-items: center;
  gap: 12px;
  border-left: 1px solid #666;
  border-right: 1px solid #666;
  font-weight: bold;
  font-size: 13.3px;
}

.stock {
  width: 162px;
  height: 25px;
  display: flex;
  align-items: center;
  gap: 6px;
  padding-left: 5px;
  background: #454545;
  border: 1px solid #777;
  border-radius: 3px;
  color: #8c8c8c;
}

.stock svg {
  width: 20px;
  height: 14px;
}

/* control bar */
.control-bar {
  height: 75px;
  flex: none;
  display: grid;
  grid-auto-flow: column;
  grid-template-rows: 26px 26px;
  row-gap: 6.4px;
  padding-top: 8.8px;
  background: #515151;
  border-bottom: 1.6px solid #383838;
  grid-template-columns:
    28px 54px 15.4px 125.6px 16px 119px 22px 20px 24px 113.5px 33px 30.9px 108.6px
    15px 28px 40px 39.5px 12px 30.5px 38px 7px 31.5px 23.7px 11.6px 110.2px
    13px 26px 88px 14px 29px 38px 7px 29px 110px 12px 40px 232px 14px 1fr 30px 8px 28px 4px;
}

.cell {
  display: flex;
  align-items: center;
  justify-content: center;
}

.tall {
  grid-row: span 2;
}

.left {
  justify-content: flex-start;
}

.pale {
  color: #c4c4c4;
}

.grey {
  color: #8f8f8f;
}

.lbl {
  color: #f0f0f0;
  padding-top: 1.5px;
}

.checker {
  padding-left: 3px;
}

.dots-grip {
  width: 2px;
  height: 24px;
  margin-left: 6px;
  background: repeating-linear-gradient(#333 0 1.5px, transparent 1.5px 2.5px);
}

.ref-point {
  width: 44.5px;
  height: 44.5px;
}

.vsep {
  width: 1px;
  height: 58px;
  background: #626262;
}

.field {
  width: 108.6px;
  height: 26px;
  display: flex;
  align-items: center;
  border-radius: 3px;
  overflow: hidden;
  color: #f0f0f0;
}

.off {
  background: #595959;
}

.off em {
  color: #989898;
}

.dim {
  background: #5d5d5d;
}

.step {
  width: 21.5px;
  height: 100%;
  display: flex;
  flex-direction: column;
  align-items: center;
  justify-content: space-between;
  padding: 2.5px 0;
  background: rgba(255, 255, 255, 0.03);
}

.step svg {
  width: 9.5px;
  height: 9.5px;
}

.field em {
  padding: 1.5px 0 0 6px;
  flex: 1;
  white-space: nowrap;
}

.drop {
  width: 10px;
  height: 10px;
  margin: 0 7px 0 auto;
}

.chain-btn,
.wrap-on {
  width: 27px;
  height: 27px;
  display: grid;
  place-items: center;
  background: #2f2f2f;
  border-radius: 3px;
}

.pbox {
  position: relative;
  width: 38px;
  height: 38px;
  background: #686868;
  color: #adadad;
  font: 24px/38px "Liberation Serif", serif;
  text-align: center;
}

.pbox svg {
  position: absolute;
  inset: 0;
}

.stroke-chip {
  width: 25px;
  height: 25px;
  border: 8px solid #000;
  background: #666;
}

.mini-btn {
  width: 21px;
  height: 26px;
  display: grid;
  place-items: center;
  background: #454545;
  border: 1px solid #6e6e6e;
  border-radius: 3px;
}

.live {
  margin-left: 0.8px;
  background: #454545;
  border: 1px solid #6e6e6e;
}

.live .step {
  background: none;
  border-right: 1px solid #6e6e6e;
}

.dropbox {
  width: 22.5px;
  height: 100%;
  display: grid;
  place-items: center;
  border-left: 1px solid #6e6e6e;
}

.line-preview {
  flex: 1;
  height: 100%;
  background: #e8e8e8;
  padding: 7px 12px 7px 5px;
}

.line-preview i {
  display: block;
  height: 9.5px;
  background: #000;
}

.line-preview b {
  display: block;
  width: 72px;
  height: 18px;
  margin: -4px 0 0 -3px;
  border-top: 2px solid #000;
  border-right: 2px solid #000;
}

.pair {
  justify-content: flex-start;
  gap: 22px;
  padding-left: 16px;
}

.fx {
  font: italic 16px "Open Sans", sans-serif;
}

.fx.big {
  width: 22px;
  font-size: 18px;
  text-align: center;
  color: #c4c4c4;
}

.opacity {
  width: 87px;
}

.style-select {
  width: 227px;
  margin-left: 5px;
}

.style-select em {
  height: 100%;
  line-height: 24px;
  padding-left: 9px;
  background: #e8e8e8;
  color: #111;
  letter-spacing: -0.1px;
}

.style-icons {
  justify-content: flex-end;
  gap: 12px;
  padding-right: 4px;
}

/* document window */
.work {
  flex: 1;
  display: flex;
  min-height: 0;
}

.doc-window {
  width: 2350px;
  flex: none;
  display: flex;
  flex-direction: column;
}

.tabs {
  height: 36.5px;
  flex: none;
  display: flex;
  background: #424242;
  color: #b4b4b4;
  border-bottom: 1px solid #383838;
}

.tab {
  flex: none;
  display: flex;
  align-items: center;
  border-right: 1px solid #363636;
  padding-left: 18.5px;
  font-size: 11.3px;
  font-weight: bold;
  white-space: nowrap;
  overflow: hidden;
}

.tab span {
  padding-top: 1px;
}

.tab svg {
  width: 10px;
  height: 10px;
  margin-right: 11.5px;
}

.tab.first {
  width: 206.5px;
  padding-left: 1px;
  letter-spacing: -0.06px;
}

.t2 {
  width: 440px;
  letter-spacing: 0.07px;
}

.t3 {
  width: 277.5px;
}

.t4 {
  width: 447.5px;
  letter-spacing: 0.08px;
}

.t5 {
  width: 443px;
  letter-spacing: -0.04px;
}

.t6 {
  width: 486px;
}

.tab.on {
  background: #535353;
  color: #f4f4f4;
}

.more {
  width: 14px;
  height: 11px;
  margin: 12px 0 0 29px;
}

.doc-grid {
  height: 1504px;
  flex: none;
  display: grid;
  grid-template-columns: 20px 2312px 18px;
  grid-template-rows: 20.5px 1483.5px;
  background: #4c4c4c;
}

.origin,
.hruler,
.vruler {
  width: 100%;
  height: 100%;
  background: #292929;
}

.canvas {
  width: 2312px;
  height: 1483.5px;
  background: #717171;
}

.hruler text,
.vruler text {
  fill: #f4f4f4;
  font-size: 12px;
}

.hruler path,
.vruler path {
  stroke: #a8a8a8;
  stroke-width: 0.7;
  fill: none;
}

.hruler .edge {
  stroke: #999;
  stroke-width: 1.4;
}

.hruler .cursor,
.vruler .cursor {
  stroke: #fff;
  stroke-width: 1;
  stroke-dasharray: 1.5 1.5;
}

/* artwork */
.frame-line {
  fill: none;
  stroke: #a4718c;
  stroke-width: 0.8;
}

.blue-line {
  fill: none;
  stroke: #5484bd;
  stroke-width: 0.7;
}

.guide {
  stroke: #3fe4ea;
  stroke-width: 0.8;
}

.dash {
  stroke: #949494;
  stroke-width: 3.2;
  stroke-dasharray: 11.3 11.3;
}

.sale {
  font: 700 75.5px Inter, sans-serif;
  fill: #ed2924;
  stroke: #8a72a5;
  stroke-width: 0.5;
}

.griffin {
  font: 162px "Liberation Serif", serif;
  font-variant-ligatures: none;
  fill: #fff;
  stroke: #fff;
  stroke-width: 0.6;
}

.sub {
  font: 350 39.5px Inter, sans-serif;
  fill: #fff;
}

.was {
  font: 300 48px Inter, sans-serif;
  fill: #fff;
}

.tagline {
  font: 400 26px Inter, sans-serif;
  fill: #fff;
  stroke: #6b84bd;
  stroke-width: 0.3;
}

.fig {
  font-family: Lato, sans-serif;
  font-weight: 700;
  fill: #fff;
}

.fig.one,
.fig.pound {
  font-family: Inter, sans-serif;
  font-weight: 600;
}

.fig.dot {
  font-family: "Liberation Sans", sans-serif;
}

.fig.yellow {
  fill: #fff02d;
  stroke: #8a8a6c;
  stroke-width: 0.5;
}

.fi-bg {
  fill: inherit;
}

.fi-line {
  fill: none;
  stroke: currentColor;
  stroke-width: 1.2;
}

.on-card {
  fill: #f6a48e;
  color: #b9756c;
}

.on-board {
  fill: #cacaca;
  color: #8a84ae;
}

/* status bar */
.status {
  height: 18.5px;
  flex: none;
  display: flex;
  align-items: center;
  background: #515151;
  padding: 1.5px 0 0 19px;
}

.zoom {
  width: 53px;
  letter-spacing: -0.3px;
}

.nav-ic {
  width: 10px;
  height: 11px;
  color: #c4c4c4;
}

.dimmed {
  color: #8a8a8a;
}

.first-pg {
  margin-left: 15px;
}

.prev-pg {
  margin-left: 16px;
}

.page-box {
  width: 111px;
  height: 17px;
  margin-left: 15px;
  display: flex;
  border: 1px solid #6e6e6e;
  border-bottom: 0;
  background: #454545;
  border-radius: 3px 3px 0 0;
}

.page-box em {
  flex: 1;
  padding-left: 6px;
  line-height: 17px;
}

.page-box span {
  width: 22px;
  display: grid;
  place-items: center;
  border-left: 1px solid #6e6e6e;
}

.next-pg {
  margin-left: 14px;
}

.last-pg {
  margin-left: 17px;
}

.preview-ic {
  width: 22px;
  height: 16px;
  margin-left: 21px;
}

.profile {
  width: 129px;
  margin-left: 18px;
  letter-spacing: -0.15px;
}

.ok-dot {
  width: 13.5px;
  height: 13.5px;
  margin: 0 7px 0 19px;
  border-radius: 50%;
  background: #169c16;
}

.errors {
  width: 78px;
  letter-spacing: -0.1px;
}

.hscroll {
  flex: 1;
  height: 100%;
  margin-left: 6px;
  display: flex;
  align-items: center;
  background: #4a4a4a;
}

.hscroll i {
  width: 760px;
  height: 15px;
  margin: 0 495px 0 411px;
  border-radius: 8px;
  background: #6a6a6a;
}

.hscroll svg {
  width: 18px;
  height: 12px;
}

/* right dock */
.dock {
  width: 207px;
  margin-left: 3px;
  background: #535353;
}

.dock-top {
  height: 15px;
  display: flex;
  justify-content: flex-end;
  align-items: center;
  padding-right: 7px;
  background: #424242;
  border-bottom: 1px solid #383838;
}

.dock-top svg {
  width: 10px;
  height: 8px;
}

.dock section {
  padding: 4.4px 6.3px 2px;
  border-bottom: 1.6px solid #383838;
}

.dock .grip {
  margin: 0 0 2.6px 84px;
}

.dock-item {
  height: 29px;
  margin-bottom: 6.2px;
  display: flex;
  align-items: center;
  gap: 12px;
  padding-left: 7px;
  font-weight: bold;
  border-radius: 3px;
}

.dock .grip + .dock-item {
  margin-top: 6px;
}

.dock section .dock-item:last-child {
  margin-bottom: 3.7px;
}

.dock-item.on {
  background: #383838;
  outline: 1px solid #5f5f5f;
}

.dock-item svg {
  width: 22px;
  height: 22px;
  color: #c4c4c4;
}

.dock-item svg.wide {
  width: 24px;
  height: 14px;
  margin: 0 -1px;
}

/* floating tools */
.tools {
  position: absolute;
  left: 59.4px;
  top: 231px;
  width: 49.6px;
  height: 824px;
  display: flex;
  flex-direction: column;
  align-items: center;
  background: #535353;
  border: 1px solid #383838;
  border-radius: 5px 5px 0 0;
  box-shadow: 0 2px 8px rgba(0, 0, 0, 0.45);
}

.tools-head {
  width: 100%;
  height: 16px;
  flex: none;
  display: flex;
  align-items: center;
  justify-content: space-between;
  padding: 0 9px 0 5.5px;
  background: #424242;
  border-bottom: 1px solid #363636;
  border-radius: 5px 5px 0 0;
  color: #c4c4c4;
}

.tools-head svg {
  width: 9px;
  height: 9px;
}

.tools-head svg:last-child {
  width: 8px;
  height: 7px;
}

.tools > .grip {
  margin: 4px 0 11px;
  flex: none;
}

.tool {
  width: 34.4px;
  height: 27px;
  margin-bottom: 3px;
  flex: none;
  display: grid;
  place-items: center;
  border-radius: 2px;
  position: relative;
}

.tool svg {
  width: 22px;
  height: 22px;
}

.tool.on {
  background: #2f2f2f;
}

.more-tools::after {
  content: "";
  position: absolute;
  right: 1.5px;
  bottom: 1.5px;
  border-left: 4.5px solid transparent;
  border-bottom: 4.5px solid #d0d0d0;
}

.tools hr {
  width: 45px;
  height: 1px;
  margin: 0 0 2.8px;
  border: 0;
  background: #626262;
  flex: none;
}

.small-row {
  width: 37px;
  height: 15px;
  display: flex;
  justify-content: space-between;
}

.small-row svg {
  width: 15px;
  height: 15px;
}

.fill-stroke svg {
  width: 36.5px;
  height: 36.5px;
  margin-top: 7px;
}

.fmt-row {
  width: 35px;
  height: 16px;
  margin: 9px 0 8.5px;
  display: flex;
  align-items: center;
  justify-content: space-between;
}

.fmt-on {
  width: 17px;
  height: 15px;
  display: grid;
  place-items: center;
  background: #2f2f2f;
  border-radius: 2px;
}

.fmt-on i {
  width: 10.5px;
  height: 10.5px;
  border: 1.2px solid #c4c4c4;
  background: #666;
}

.fmt-on.big {
  width: 23px;
  height: 23px;
  margin-left: 12px;
}

.t-serif {
  font: bold 15px "Liberation Serif", serif;
  color: #c4c4c4;
}

.view-opt {
  margin: 6px 0 11px;
}

/* buttons and forms */
.forms-panel {
  position: absolute;
  left: 1930.3px;
  top: 269px;
  width: 118px;
  height: 496px;
  padding-left: 7px;
  overflow: hidden;
  background: #535353;
  border: 1px solid #383838;
  border-right: 0;
  border-radius: 5px 0 0 0;
  box-shadow: 0 2px 8px rgba(0, 0, 0, 0.4);
  color: #a0a0a0;
  white-space: nowrap;
}

.forms-head {
  height: 17px;
  margin-left: -7px;
  padding: 4px 0 0 5.5px;
  background: #424242;
  border-bottom: 1px solid #363636;
  color: #c4c4c4;
}

.forms-head svg {
  width: 9px;
  height: 9px;
}

.forms-title {
  height: 41px;
  padding: 11px 0 0 4px;
  display: flex;
  gap: 6px;
  font-weight: bold;
  color: #f0f0f0;
}

.diamond {
  width: 6px;
  flex: none;
  font-size: 9px;
  font-weight: normal;
  line-height: 14px;
  color: #a0a0a0;
}

.form-row {
  display: flex;
  align-items: center;
  height: 26px;
  margin-bottom: 6.5px;
}

.form-row label {
  width: 70.5px;
  flex: none;
  margin: 1px 6px 0 0;
  text-align: right;
}

.bright label {
  color: #f0f0f0;
}

.inp {
  width: 40px;
  height: 26px;
  line-height: 26px;
  padding-left: 5px;
  border-radius: 3px 0 0 3px;
  color: #f0f0f0;
}

.ghost {
  background: #585858;
  color: #cfcfcf;
}

.solid {
  background: #454545;
  border: 1px solid #6e6e6e;
  border-right: 0;
  line-height: 25px;
}

.plus {
  width: 16px;
  height: 16px;
  margin-left: 3px;
}

.action-list {
  height: 101px;
  margin: 10px 0 12.5px -1px;
  border: 1px solid #626262;
  border-right: 0;
}

.check-row {
  display: flex;
  align-items: center;
  gap: 7px;
  height: 15px;
  color: #8a8a8a;
}

.check-row i {
  width: 14.5px;
  height: 14.5px;
  flex: none;
  border: 1px solid #787878;
  border-radius: 2px;
}

.pdf-opts {
  margin-top: 12px;
  padding: 13px 0 0 5px;
  height: 45px;
  display: flex;
  gap: 7px;
  border-top: 1px solid #626262;
  color: #f4f4f4;
}

.pdf-opts svg {
  margin-top: 1px;
}

.desc {
  height: 58px;
  padding-top: 1.5px;
}

.desc span {
  display: block;
  height: 26px;
  margin-top: 6px;
  background: #585858;
}

.printable {
  margin-bottom: 13px;
}

.forms-foot {
  border-top: 1px solid #626262;
  padding: 8px 0 0 3px;
}

.forms-foot svg {
  width: 15.5px;
  height: 14px;
}

/* swatches */
.swatch-panel {
  position: absolute;
  left: 2047.2px;
  top: 208px;
  width: 305.5px;
  height: 683px;
  display: flex;
  flex-direction: column;
  background: #515151;
  border: 1px solid #383838;
  border-top: 5.5px solid #333;
  box-shadow: 0 2px 8px rgba(0, 0, 0, 0.4);
}

.sw-tabs {
  height: 33.5px;
  flex: none;
  display: flex;
  background: #424242;
  font-weight: bold;
  color: #a8a8a8;
  line-height: 36.5px;
}

.sw-tabs > span {
  overflow: hidden;
  white-space: nowrap;
  border-right: 1px solid #363636;
  border-bottom: 1px solid #363636;
  padding-left: 14.3px;
}

.st1 {
  width: 41.5px;
}

.sw-tabs .st2 {
  width: 100.5px;
  display: flex;
  gap: 6.5px;
  padding-left: 9px;
  background: #515151;
  color: #f2f2f2;
  border-bottom: 0;
}

.st2 .diamond {
  line-height: 35px;
}

.st3,
.st4 {
  width: 40px;
}

.st-end {
  flex: 1;
  display: flex;
  align-items: center;
  gap: 8px;
  padding: 1px 0 0 30px;
  color: #c4c4c4;
  border-bottom: 1px solid #363636;
}

.st-end i {
  width: 1px;
  height: 14px;
  background: #999;
}

.sw-opts {
  height: 51px;
  flex: none;
  display: flex;
  align-items: center;
  padding: 2.5px 0 0 8px;
  border-bottom: 1px solid #454545;
}

.sw-fs {
  width: 37px;
  height: 37px;
}

.sw-opts .t-serif {
  margin: 0 52px 0 8px;
  font-weight: normal;
  font-size: 17px;
}

.tint-box {
  width: 66px;
  height: 26px;
  margin: 0 4px 0 6px;
  display: flex;
  align-items: center;
  justify-content: flex-end;
  padding-right: 6px;
  background: #5c5c5c;
  border-radius: 3px;
}

.sw-body {
  height: 551px;
  flex: none;
  display: flex;
  padding-left: 1px;
}

.sw-list {
  width: 285px;
  border-right: 1px solid #444;
}

.sw-row {
  height: 27.5px;
  display: flex;
  align-items: center;
  padding-left: 21.5px;
  background: #646464;
  border-bottom: 1px solid #505050;
  box-shadow: inset 0 1px #707070;
  font-size: 12.2px;
  color: #fafafa;
}

.sw-row.sel {
  background: #5a7d96;
  box-shadow: none;
}

.chip {
  width: 17px;
  height: 16.8px;
  flex: none;
  margin-top: -0.5px;
  border: 1.6px solid #3a3a3a;
}

.sw-name {
  margin-left: 9px;
  width: 169.3px;
  flex: none;
  white-space: nowrap;
}

.sw-icons {
  width: 52px;
  flex: none;
  display: flex;
  align-items: center;
  justify-content: flex-end;
  gap: 6px;
  color: #cfcfcf;
}

.sw-icons svg {
  width: 14px;
  height: 14px;
}

.sw-icons .pen {
  width: 15.5px;
  height: 15.5px;
}

.sw-icons .gap {
  margin-right: 19px;
}

.sw-scroll {
  flex: 1;
  background: #464646;
  padding-left: 1px;
}

.sw-scroll i {
  display: block;
  width: 12.5px;
  height: 365px;
  border-radius: 7px;
  background: #6a6a6a;
}

.sw-foot {
  height: 33px;
  flex: none;
  display: flex;
  align-items: center;
  padding-left: 9px;
  border-top: 1px solid #626262;
  border-bottom: 2px solid #383838;
}

.sw-foot svg {
  height: 15px;
}

.f1 {
  width: 17px;
}

.f2 {
  width: 20px;
  margin-left: 126px;
}

.f3 {
  width: 17px;
  margin-left: 15px;
}

.f4 {
  width: 15px;
  margin-left: 21px;
}

.f5 {
  width: 14px;
  margin-left: 18px;
}

.sw-grip {
  flex: 1;
  padding-top: 1px;
}

.sw-grip .grip {
  margin-left: 139px;
}
```

FILE: script.js
```js
const MM = 8.008;
const X0 = 456.3;
const Y0 = 122.5;

function drawHRuler() {
  let ticks = "";
  let labels = "";
  for (let mm = -54; mm < 235; mm++) {
    const x = (X0 + mm * MM).toFixed(2);
    const top = mm % 10 === 0 ? 183 : mm % 5 === 0 ? 197 : 199.3;
    ticks += `M${x} ${top}V202`;
    if (mm % 10 === 0) {
      labels += `<text x="${+x + 2.5}" y="195.6">${Math.abs(mm)}</text>`;
    }
  }
  document.getElementById("hruler").innerHTML =
    `<path d="${ticks}"/>${labels}<path class="cursor" d="M420.3 183V202"/><path class="edge" d="M20 202.3H2332"/>`;
}

function drawVRuler() {
  let ticks = "M19.7 203V1687";
  let labels = "";
  for (let mm = 10; mm < 196; mm++) {
    const y = (Y0 + mm * MM).toFixed(2);
    const left = mm % 10 === 0 ? 1 : mm % 5 === 0 ? 15 : 17.5;
    ticks += `M${left} ${y}H20`;
    if (mm % 10 === 0) {
      String(mm).split("").forEach((digit, i) => {
        labels += `<text x="3.4" y="${+y + 13.2 + i * 11.2}">${digit}</text>`;
      });
    }
  }
  document.getElementById("vruler").innerHTML =
    `<path d="${ticks}"/>${labels}<path class="cursor" d="M0 793.5H20"/>`;
}

// halftone dots grow towards the corners of the card
function halftone(x, y) {
  let dots = "";
  let row = 0;
  for (let cy = 6; cy < 1150; cy += 15, row++) {
    if (cy + y < 195 || cy + y > 1695) continue;
    for (let cx = row % 2 ? 24 : 9; cx < 800; cx += 30) {
      const d = Math.hypot((cx - 400) / 400, (cy - 575) / 575) / 1.414;
      const r = 0.8 + 6 * d * d;
      dots += `<circle cx="${cx}" cy="${cy}" r="${r.toFixed(1)}"/>`;
    }
  }
  return `<svg x="${x}" y="${y}" width="800.8" height="1150.3" fill="#ed2a26">${dots}</svg>`;
}

function rule(x, y) {
  return `<rect x="${x}" y="${y - 2}" width="657.5" height="4" rx="2" fill="#fff" stroke="#5b7fc0" stroke-width=".7"/>
    <path class="blue-line" d="M${x} ${y - 2}L${x + 657} ${y + 2}M${x} ${y + 2}L${x + 657} ${y - 2}"/>`;
}

function fieldIcon(x, y, cls) {
  return `<use href="#field-icon" class="${cls}" x="${x}" y="${y}" width="28" height="22.6"/>`;
}

function glyph(ch, x, y, size, width, cls = "") {
  return `<text class="fig ${cls}" x="${x}" y="${y}" font-size="${size}" textLength="${width}" lengthAdjust="spacingAndGlyphs">${ch}</text>`;
}

function priceA() {
  return glyph("£", 526.3, 1022.7, 173, 112, "pound yellow") +
    glyph("1", 625, 1022.7, 217, 85, "one") +
    glyph("4", 705.3, 1022.7, 219, 133) +
    glyph("9", 834.3, 1022.7, 219, 130) +
    glyph(".", 944.5, 1022.7, 152, 42, "dot yellow") +
    glyph("99", 988.3, 1022.7, 176, 201, "yellow");
}

function priceB() {
  const x = -880.9;
  return glyph("£", 1505 + x, 1022.7, 173, 112, "pound") +
    glyph("1", 1611 + x, 1022.7, 231, 88, "one") +
    glyph("4", 1696.3 + x, 1022.7, 233, 142) +
    glyph("9", 1833.3 + x, 1022.7, 233, 138);
}

// lower cards stop below the product name, so only the upper ones carry details
function details(price) {
  let zig = "M745.5 768.2";
  for (let i = 1; i <= 34; i++) {
    zig += `L${(745.5 + i * 3.15).toFixed(2)} ${i % 2 ? 765 : 768.2}`;
  }
  return `
    <path class="frame-line" d="M1257 608.5H528V658.2H1257M456 713.3H1257M456 773.8H1257M456 777.6H1257M456 1035.9H1257"/>
    <text class="sub" x="527" y="649.8" textLength="225" lengthAdjust="spacingAndGlyphs">Dining Chair</text>
    <text class="was" x="745" y="763.8" textLength="222" lengthAdjust="spacingAndGlyphs">WAS £199</text>
    <path d="M721 754.6 992 740.5" stroke="#5b7fb8" stroke-width="4.4" stroke-linecap="round"/>
    <path d="M721 754.6 992 740.5" stroke="#000" stroke-width="3.1" stroke-linecap="round"/>
    <path class="blue-line" d="M780 751.2 930 744M780 752.2 930 743"/>
    <text class="tagline" x="647" y="1195.9" textLength="419" lengthAdjust="spacingAndGlyphs">Limited time offer – Don’t miss out!</text>
    ${rule(528, 802.8)}${rule(528, 1083.9)}
    ${fieldIcon(1221.8, 567.2, "on-card")}${fieldIcon(1221.8, 631.8, "on-card")}${fieldIcon(1221.8, 751.2, "on-card")}${fieldIcon(1221.8, 1009.8, "on-card")}
    ${price}
    <path d="${zig}" fill="none" stroke="#5fb06c" stroke-width="1.2"/>`;
}

function card(x, y, price) {
  return `
    <rect x="${x}" y="${y}" width="800.8" height="1150.3" fill="#e72726"/>
    ${halftone(x, y)}
    <path class="frame-line" d="M${x} ${y}h800.8v1150.3h-800.8zl800.8 1150.3M${x + 800.8} ${y}l-800.8 1150.3"/>
    <g transform="translate(${x - X0} ${y - Y0})">
      <path class="frame-line" d="M1257 361.4H528V593.6H1257"/>
      <circle cx="1064.6" cy="308.3" r="121.4" fill="#fff" stroke="#6f82b8" stroke-width=".7"/>
      <path class="blue-line" d="M978.8 222.5l171.6 171.6M1150.4 222.5l-171.6 171.6"/>
      <text class="sale" x="969.5" y="335.8" textLength="190" lengthAdjust="spacingAndGlyphs">SALE</text>
      <text class="griffin" x="530" y="557" textLength="437" lengthAdjust="spacingAndGlyphs">Griffin</text>
      ${price ? details(price) : ""}
    </g>`;
}

function linkBadge(x, y) {
  return `<rect x="${x}" y="${y}" width="19" height="12" rx="5" fill="#fff"/>
    <svg x="${x + 1.5}" y="${y + 1}" width="16" height="10" viewBox="0 0 24 14" color="#1473b8"><use href="#chain"/></svg>`;
}

function drawCanvas() {
  document.getElementById("canvas").innerHTML = `
    <path class="blue-line" d="M20 394.6H357.3V796.3H20M20 967.1H330.6V1432H20"/>
    ${fieldIcon(322.4, 770, "on-board")}${fieldIcon(295.5, 1405.5, "on-board")}
    <rect x="2138" y="122" width="2.8" height="1700" fill="#000"/>
    <rect x="${X0}" y="122" width="1681.7" height="1700" fill="#fff"/>
    <path class="dash" d="M1297.2 122.5V1800M456.3 1313.2H2138"/>
    ${card(X0, Y0, priceA())}
    ${card(X0 + 880.9, Y0, priceB())}
    ${card(X0, 1350.3, "")}
    ${card(X0 + 880.9, 1350.3, "")}
    <path class="guide" d="M1257.2 122V1800M456 1273H2138"/>
    <path d="M456.3 122V1800" stroke="#b04fb8" stroke-width=".8"/>
    ${linkBadge(465.8, 1344.5)}${linkBadge(1346.7, 1344.5)}`;
}

const swatches = [
  ["[None]", "none", "nonebox"],
  ["[Registration]", "#000", "reg"],
  ["[Paper]", "#fff", ""],
  ["[Black]", "#000", "cmyk", true],
  ["C=100 M=0 Y=0 K=0", "#00aeef", "cmyk"],
  ["C=0 M=100 Y=0 K=0", "#ef2a8e", "cmyk"],
  ["C=0 M=0 Y=100 K=0", "#fff02d", "cmyk"],
  ["C=0 M=100 Y=100 K=...", "#ed2924", "cmyk"],
  ["C=75 M=5 Y=100 K=0", "#41ad49", "cmyk"],
  ["C=100 M=90 Y=10 K=0", "#233f90", "cmyk"],
  ["Black Support", "#000", "cmyk"],
  ["r251g209b91 copy", "#45aba9", "cmyk"],
  ["r251g209b91 copy 2", "#656565", "rgb"],
  ["C=0 M=65 Y=100 K=0", "#f47b20", "cmyk"],
  ["r175g23b56", "#b01b3c", "rgb"],
  ["r253g183b42", "#fab52c", "rgb"],
  ["r255g255b255", "#fff", "rgb"],
  ["r65g58b60", "#413a3c", "rgb"],
  ["C=0 M=16 Y=85 K=19", "#d3af37", "cmyk"],
  ["C=94 M=31 Y=0 K=90", "#001a35", "cmyk"],
];

function icon(id, cls = "") {
  return `<svg class="${cls}"><use href="#${id}"/></svg>`;
}

function drawSwatches() {
  document.getElementById("swatches").innerHTML = swatches
    .map(([name, color, kind, locked]) => {
      const chip =
        color === "none"
          ? icon("none", "chip")
          : `<i class="chip" style="background:${color}"></i>`;
      let icons = "";
      if (kind === "nonebox" || kind === "reg") icons = icon("nopen", "pen gap") + icon(kind);
      else if (kind) icons = (locked ? icon("nopen", "pen") : "") + icon("tint") + icon(kind);
      return `<div class="sw-row ${color === "none" ? "sel" : ""}">${chip}<span class="sw-name">${name}</span><span class="sw-icons">${icons}</span></div>`;
    })
    .join("");
}

drawHRuler();
drawVRuler();
drawCanvas();
drawSwatches();
```
